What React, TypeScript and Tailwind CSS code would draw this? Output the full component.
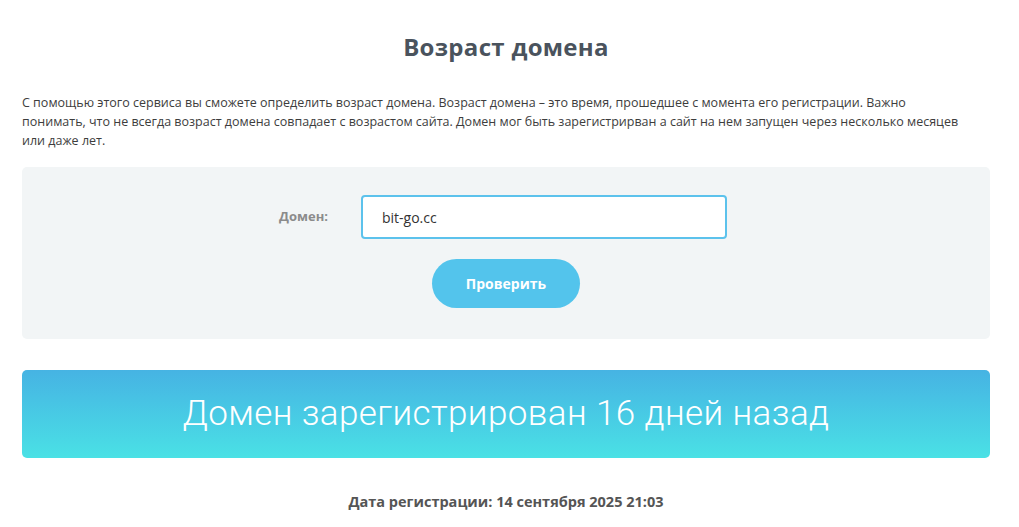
export default function App() {
  const domain = 'bit-go.cc';

  return (
    <div className="min-h-screen bg-white font-['Open_Sans',sans-serif] text-[#333]">
      <div className="ml-[22px] mr-[29px] pt-[30px]">
        <h1 className="text-center text-[24px] font-bold tracking-[0.3px] text-[#4a535d] leading-[34px]">Возраст домена</h1>

        <p className="mt-[29px] text-[12.5px] leading-[19px] text-[#3d3d3d]">
          С помощью этого сервиса вы сможете определить возраст домена. Возраст домена – это время, прошедшее с момента его регистрации. Важно
          <br />
          понимать, что не всегда возраст домена совпадает с возрастом сайта. Домен мог быть зарегистрирван а сайт на нем запущен через несколько месяцев
          <br />
          или даже лет.
        </p>

        {/* форма проверки */}
        <form className="mt-[17px] h-[172px] rounded-[5px] bg-[#f2f5f6] pt-[28px] flex flex-col items-center">
          <div className="flex items-center mr-[6px]">
            <label className="w-[82px] text-[13px] font-bold text-[#8b8b8b]">Домен:</label>
            <input
              defaultValue={domain}
              className="w-[366px] h-[44px] rounded-[4px] border-2 border-[#5cc2ec] bg-white px-[19px] text-[14px] text-[#333] outline-none"
            />
          </div>
          <button
            type="button"
            className="mt-[20px] w-[148px] h-[49px] rounded-full bg-[#53c4ec] text-[14px] font-bold text-white"
          >
            Проверить
          </button>
        </form>

        <div className="mt-[31px] h-[88px] rounded-[5px] bg-gradient-to-b from-[#46b3e3] to-[#4ae1e5] flex items-center justify-center">
          <span className="font-['Roboto',sans-serif] font-light text-[35px] tracking-[0.4px] text-white">Домен зарегистрирован 16 дней назад</span>
        </div>

        <div className="mt-[33px] text-center text-[14.5px] font-bold text-[#555]">
          Дата регистрации: 14 сентября 2025 21:03
        </div>
      </div>
    </div>
  );
}
